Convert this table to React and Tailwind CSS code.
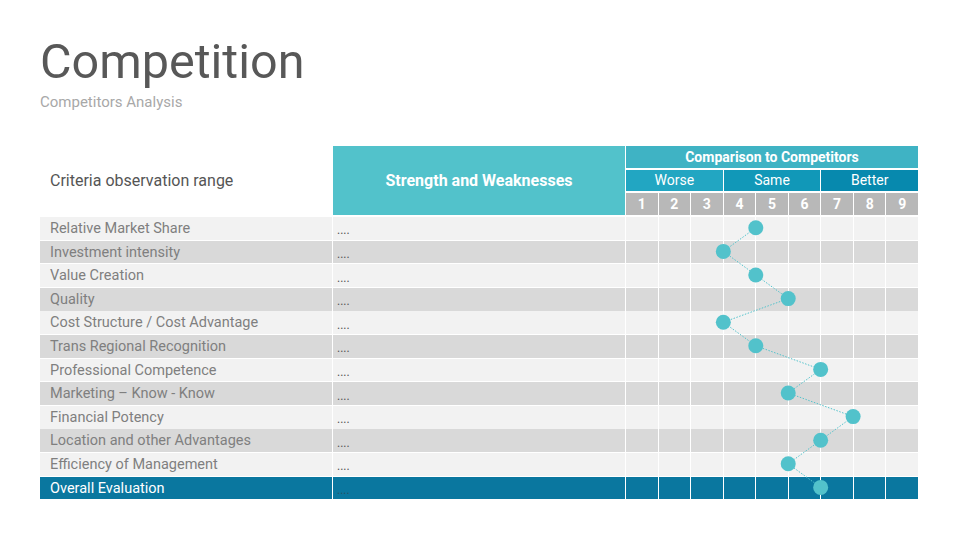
import React from 'react';

const rows = [
  { label: 'Relative Market Share', score: 4 },
  { label: 'Investment intensity', score: 3 },
  { label: 'Value Creation', score: 4 },
  { label: 'Quality', score: 5 },
  { label: 'Cost Structure / Cost Advantage', score: 3 },
  { label: 'Trans Regional Recognition', score: 4 },
  { label: 'Professional Competence', score: 6 },
  { label: 'Marketing – Know - Know', score: 5 },
  { label: 'Financial Potency', score: 7 },
  { label: 'Location and other Advantages', score: 6 },
  { label: 'Efficiency of Management', score: 5 },
];

const ROW_H = 21.6;
const ROW_GAP = 2;
const COL_W = 292 / 9;

const App = () => {
  const scores = [...rows.map((r) => r.score), 6];
  const points = scores.map((s, i) => [s * COL_W, i * (ROW_H + ROW_GAP) + ROW_H / 2]);
  const bodyH = 12 * ROW_H + 11 * ROW_GAP;

  return (
    <div className="w-[960px] h-[540px] bg-white overflow-hidden font-['Roboto',sans-serif]">
      <div className="pl-10 pt-[34px]">
        <h1 className="text-[48.5px] leading-[56px] text-[#585858]">Competition</h1>
        <p className="text-[15px] leading-5 text-[#a8a8a8] mt-[2px]">Competitors Analysis</p>
      </div>

      <div className="ml-10 mt-[34px] w-[878px]">
        {/* header */}
        <div className="grid grid-cols-[292px_292px_292px] gap-x-[1px] h-[69px]">
          <div className="flex items-center pl-[10px] text-[16px] text-[#555]">Criteria observation range</div>
          <div className="flex items-center justify-center bg-[#52c2cb] text-white font-bold text-[16px]">
            Strength and Weaknesses
          </div>
          <div className="flex flex-col gap-[2px]">
            <div className="h-[22px] bg-[#3fb3c4] text-white font-bold text-[14px] flex items-center justify-center">
              Comparison to Competitors
            </div>
            <div className="h-[21px] grid grid-cols-3 gap-x-[1px] text-white text-[14px]">
              <div className="bg-[#22a6c2] flex items-center justify-center">Worse</div>
              <div className="bg-[#1198b8] flex items-center justify-center">Same</div>
              <div className="bg-[#0789ae] flex items-center justify-center">Better</div>
            </div>
            <div className="h-[22px] grid grid-cols-9 gap-x-[1px] text-white font-bold text-[14px]">
              {[1, 2, 3, 4, 5, 6, 7, 8, 9].map((n) => (
                <div key={n} className="bg-[#b8b8b8] flex items-center justify-center">{n}</div>
              ))}
            </div>
          </div>
        </div>

        {/* body */}
        <div className="relative mt-[2px]">
          <div className="flex flex-col gap-[2px]">
            {rows.map((r, i) => {
              const bg = i % 2 === 0 ? 'bg-[#f2f2f2]' : 'bg-[#d9d9d9]';
              return (
                <div key={r.label} className="grid grid-cols-[292px_292px_292px] gap-x-[1px] h-[21.6px]">
                  <div className={`${bg} pl-[10px] pt-[1px] flex items-center text-[14.5px] text-[#7f7f7f]`}>{r.label}</div>
                  <div className={`${bg} pl-[4px] pt-[4px] flex items-center text-[12px] text-[#555]`}>....</div>
                  <div className="grid grid-cols-9 gap-x-[1px]">
                    {Array.from({ length: 9 }).map((_, k) => (
                      <div key={k} className={bg} />
                    ))}
                  </div>
                </div>
              );
            })}
            <div className="grid grid-cols-[292px_292px_292px] gap-x-[1px] h-[21.6px]">
              <div className="bg-[#0a779f] pl-[10px] pt-[1px] flex items-center text-[14.5px] text-white">Overall Evaluation</div>
              <div className="bg-[#0a779f] pl-[4px] pt-[4px] flex items-center text-[12px] text-[#2a5566]">....</div>
              <div className="grid grid-cols-9 gap-x-[1px]">
                {Array.from({ length: 9 }).map((_, k) => (
                  <div key={k} className="bg-[#0a779f]" />
                ))}
              </div>
            </div>
          </div>

          <svg
            className="absolute top-0 left-[586px]"
            width="292"
            height={bodyH}
            viewBox={`0 0 292 ${bodyH}`}
          >
            <polyline
              points={points.map((p) => p.join(',')).join(' ')}
              fill="none"
              stroke="#52c2cb"
              strokeWidth="1"
              strokeDasharray="1.5 1.5"
            />
            {points.map(([x, y], i) => (
              <circle key={i} cx={x} cy={y} r="7.5" fill="#52c2cb" />
            ))}
          </svg>
        </div>
      </div>
    </div>
  );
};

export default App;
